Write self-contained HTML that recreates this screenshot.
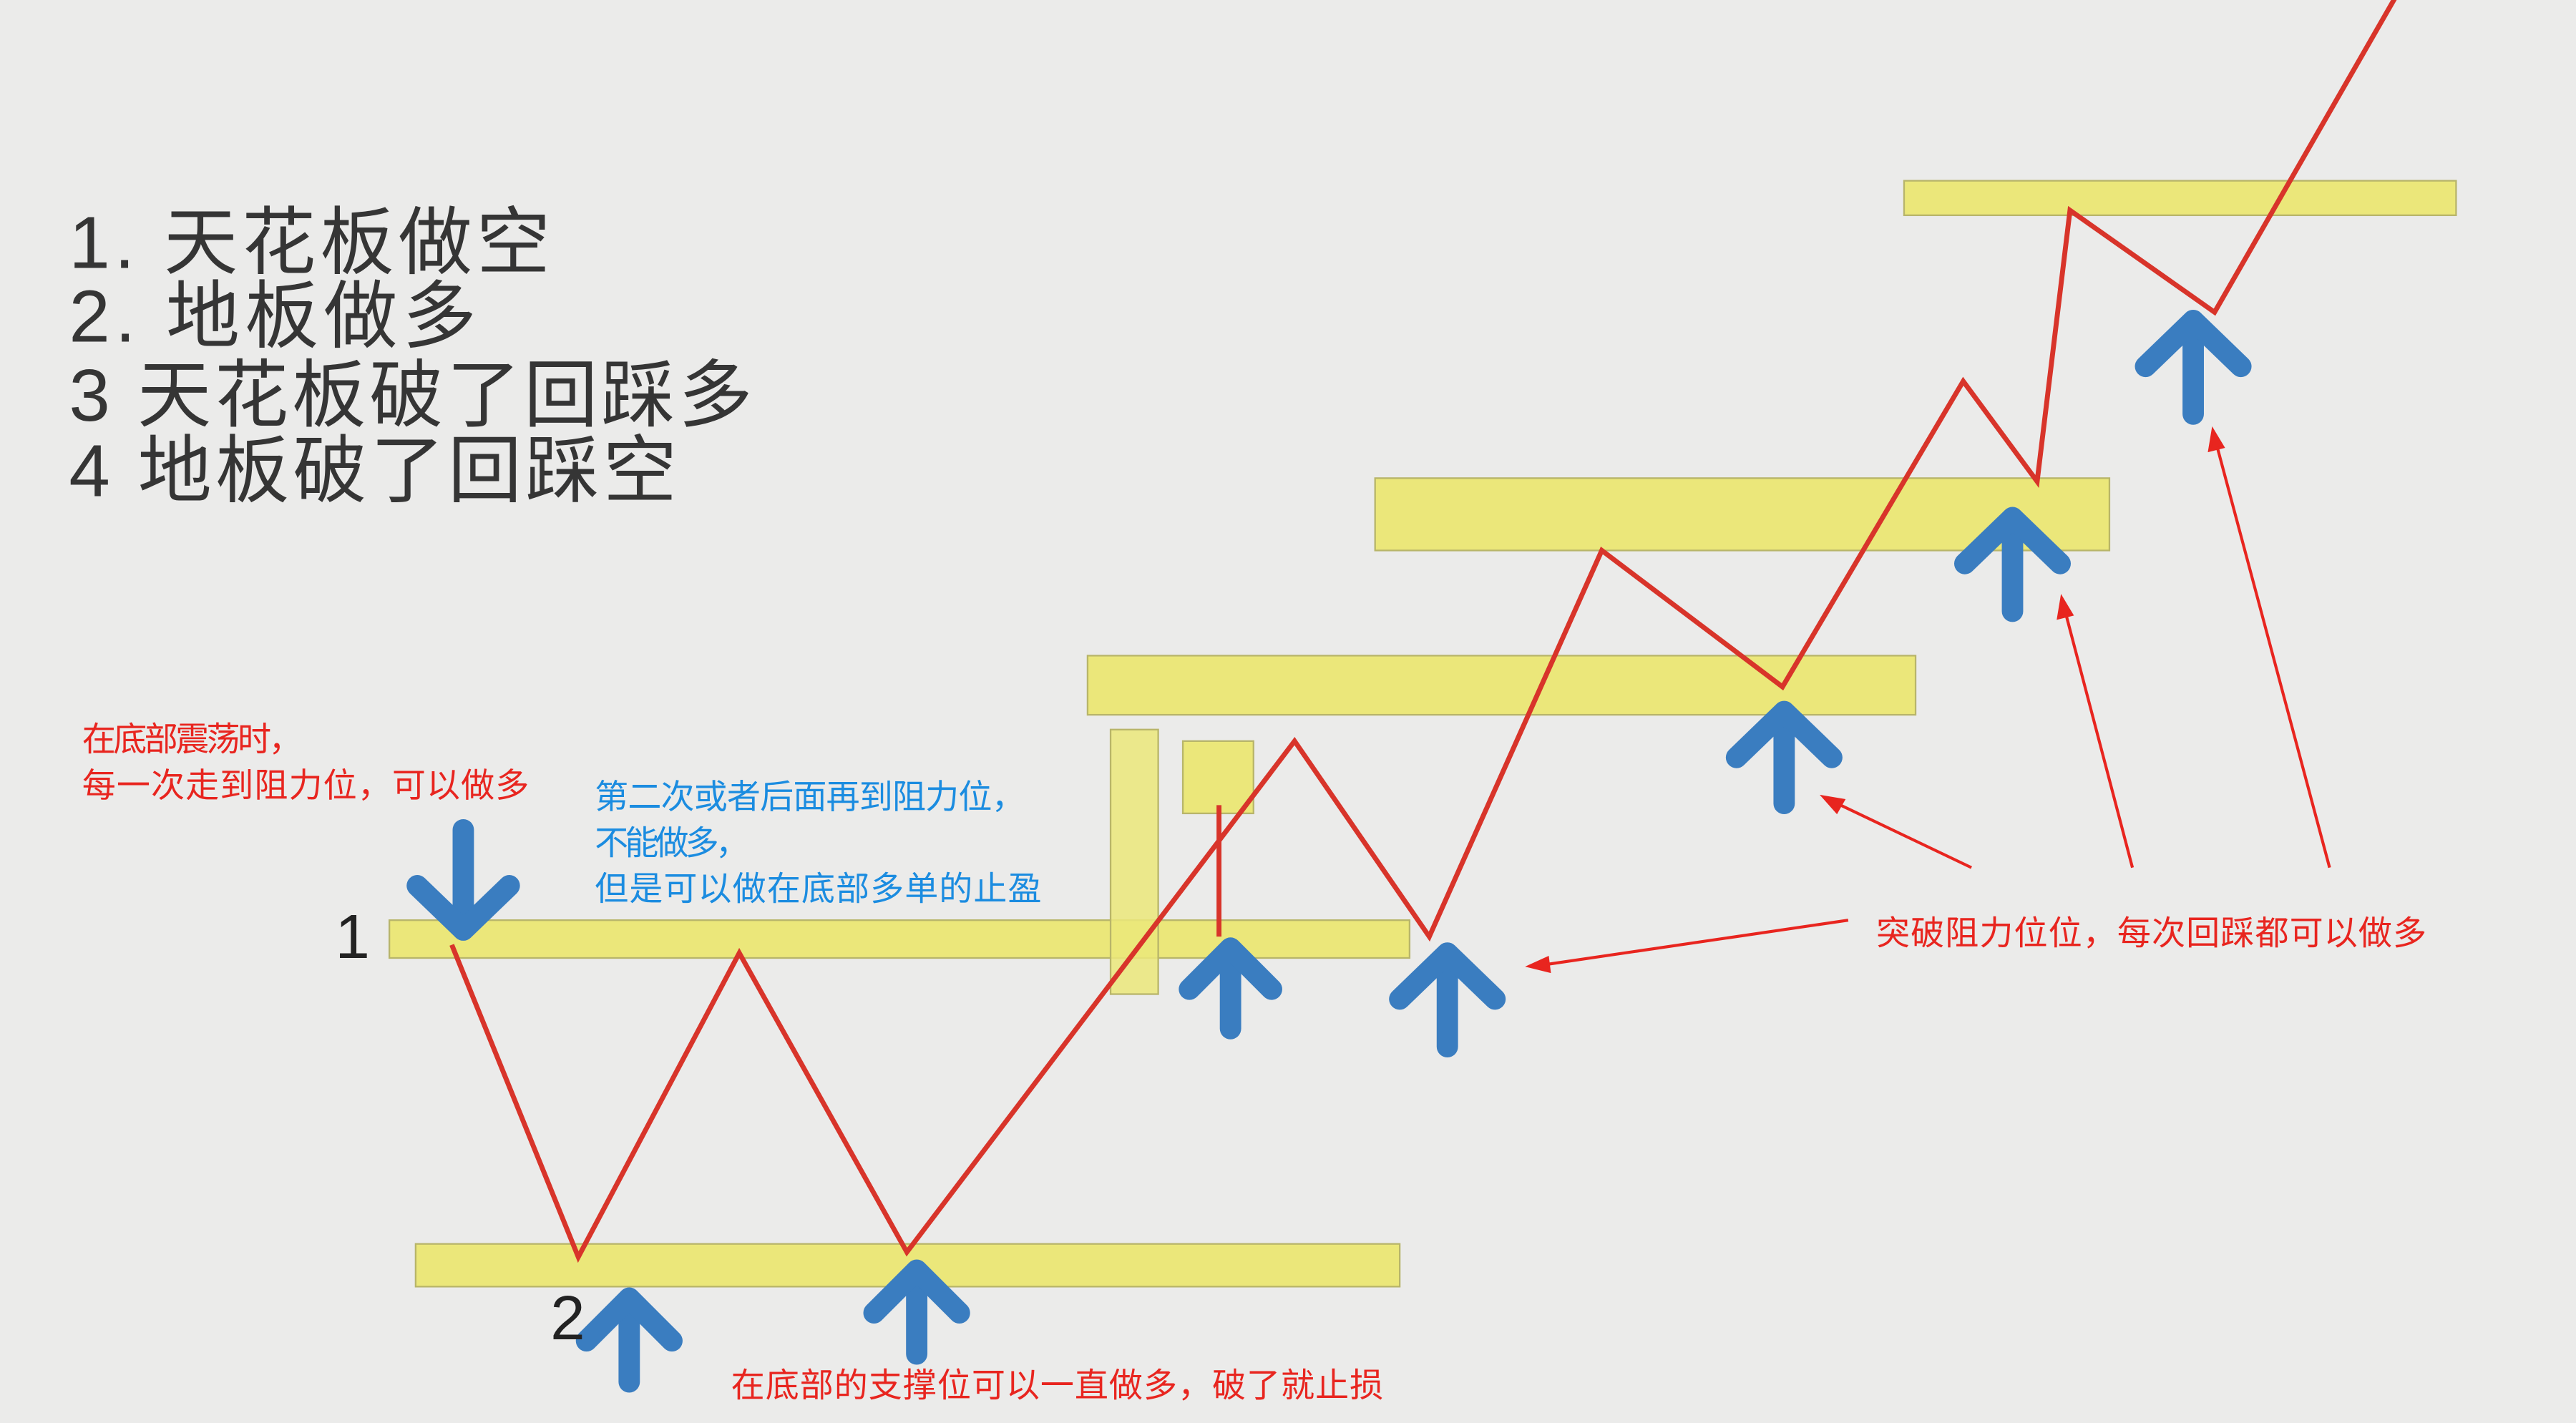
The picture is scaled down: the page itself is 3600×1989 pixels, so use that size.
<!DOCTYPE html>
<html><head><meta charset="utf-8"><style>
html,body{margin:0;padding:0;background:#ebebea;width:3600px;height:1989px;overflow:hidden}
svg{display:block}
text{font-family:"Liberation Sans","Noto Sans CJK SC",sans-serif}
</style></head><body>
<svg width="3600" height="1989" viewBox="0 0 1568 866" preserveAspectRatio="none" xmlns="http://www.w3.org/2000/svg">
<rect width="1568" height="866" fill="#ebebea"/>
<g fill="#ebe77a" stroke="#b8b56a" stroke-width="1">
<rect x="237" y="560" width="621" height="23"/>
<rect x="253" y="757" width="599" height="26"/>
<rect x="662" y="399" width="504" height="36"/>
<rect x="837" y="291" width="447" height="44"/>
<rect x="1159" y="110" width="336" height="21"/>
<rect x="676" y="444" width="29" height="161" fill-opacity="0.85"/>
<rect x="720" y="451" width="43" height="44"/>
</g>
<g fill="none" stroke="#d8342a" stroke-width="3" stroke-linejoin="miter">
<polyline points="275,575 352,765 450,580 552,762 788,451 870,570 975,335 1085,418 1195,232 1240,293 1260,128 1348,190 1460,-5"/>
<line x1="742" y1="490" x2="742" y2="570"/>
</g>
<g stroke="#3a7dc0" stroke-width="13" stroke-linecap="round" stroke-linejoin="round" fill="none">
<g transform="translate(282,505)"><line x1="0" y1="0" x2="0" y2="58"/><polyline points="-28,34 0,61 28,34"/></g>
<g transform="translate(383,787)"><line x1="0" y1="4" x2="0" y2="54"/><polyline points="-26,29 0,3 26,29"/></g>
<g transform="translate(558,770)"><line x1="0" y1="4" x2="0" y2="54"/><polyline points="-26,29 0,3 26,29"/></g>
<g transform="translate(749,574)"><line x1="0" y1="4" x2="0" y2="52"/><polyline points="-25,28 0,3 25,28"/></g>
<g transform="translate(881,577)"><line x1="0" y1="4" x2="0" y2="60"/><polyline points="-29,31 0,3 29,31"/></g>
<g transform="translate(1086,430)"><line x1="0" y1="4" x2="0" y2="59"/><polyline points="-29,31 0,3 29,31"/></g>
<g transform="translate(1225,312)"><line x1="0" y1="4" x2="0" y2="60"/><polyline points="-29,31 0,3 29,31"/></g>
<g transform="translate(1335,192)"><line x1="0" y1="4" x2="0" y2="60"/><polyline points="-29,31 0,3 29,31"/></g>
</g>
<g fill="#353535" font-size="45">
<text x="42" y="163" textLength="293" lengthAdjust="spacing">1. 天花板做空</text>
<text x="42" y="208" textLength="248" lengthAdjust="spacing">2. 地板做多</text>
<text x="42" y="256" textLength="416" lengthAdjust="spacing">3 天花板破了回踩多</text>
<text x="42" y="302" textLength="370" lengthAdjust="spacing">4 地板破了回踩空</text>
</g>
<text x="204" y="583" font-size="38" fill="#222">1</text>
<text x="335" y="815" font-size="38" fill="#222">2</text>
<g fill="#e8251f" font-size="20.5">
<text x="50" y="457" textLength="134">在底部震荡时，</text>
<text x="50" y="485" textLength="272">每一次走到阻力位，可以做多</text>
<text x="445" y="850" textLength="397">在底部的支撑位可以一直做多，破了就止损</text>
<text x="1142" y="575" textLength="335">突破阻力位位，每次回踩都可以做多</text>
</g>
<g fill="#1b8ce0" font-size="20.5">
<text x="362" y="492" textLength="262">第二次或者后面再到阻力位，</text>
<text x="362" y="520" textLength="94">不能做多，</text>
<text x="362" y="548" textLength="272">但是可以做在底部多单的止盈</text>
</g>
<g stroke="#e8251f" stroke-width="1.8" fill="#e8251f">
<line x1="1200" y1="528" x2="1112" y2="486"/><polygon points="1110,485 1122,487 1118,494"/>
<line x1="1125" y1="560" x2="934" y2="588"/><polygon points="931,588 942,583 943,591"/>
<line x1="1298" y1="528" x2="1256" y2="368"/><polygon points="1255,364 1253,376 1261,374"/>
<line x1="1418" y1="528" x2="1348" y2="266"/><polygon points="1347,262 1345,274 1353,272"/>
</g>
</svg>
</body></html>
